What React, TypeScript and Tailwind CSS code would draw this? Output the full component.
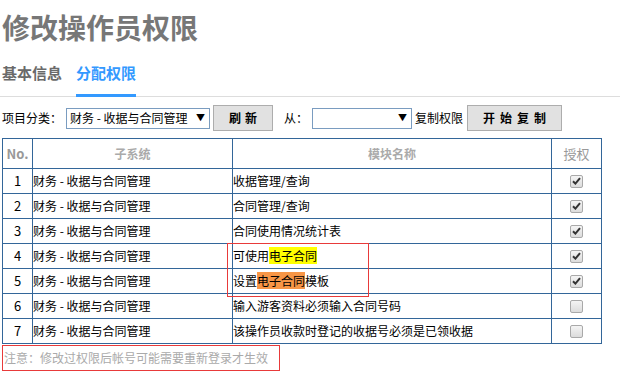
import React from "react";

const font = { fontFamily: '"Microsoft YaHei", "Noto Sans CJK SC", "Noto Sans", sans-serif' };

function Check({ on }: { on: boolean }) {
  return (
    <div className="w-[13px] h-[13px] rounded-[2px] border border-[#a9a9a9] bg-gradient-to-b from-[#f4f4f4] to-[#dcdcdc] flex items-center justify-center">
      {on && (
        <svg width="9" height="8" viewBox="0 0 9 8">
          <path d="M1 4.2 L3.4 6.6 L8 1.2" stroke="#333" strokeWidth="2" fill="none" />
        </svg>
      )}
    </div>
  );
}

const rows: { mod: React.ReactNode; on: boolean }[] = [
  { mod: "收据管理/查询", on: true },
  { mod: "合同管理/查询", on: true },
  { mod: "合同使用情况统计表", on: true },
  {
    mod: (
      <>
        可使用<span className="bg-[#ffff00]">电子合同</span>
      </>
    ),
    on: true,
  },
  {
    mod: (
      <>
        设置<span className="bg-[#f79646]">电子合同</span>模板
      </>
    ),
    on: true,
  },
  { mod: "输入游客资料必须输入合同号码", on: false },
  { mod: "该操作员收款时登记的收据号必须是已领收据", on: false },
];

export default function App() {
  return (
    <div className="w-[621px] h-[379px] bg-white pl-[2px] text-[12px] text-black overflow-hidden" style={font}>
      <div className="h-[54px] flex items-center text-[28px] leading-[28px] font-bold text-[#777777]">
        修改操作员权限
      </div>
      <div className="flex border-b border-[#dddddd] mr-[1px] -ml-[2px] pl-[2px]">
        <div className="pt-[9px] pb-[11px] text-[15px] leading-[20px] font-bold text-[#6a6a6a] border-b-[3px] border-transparent -mb-px">
          基本信息
        </div>
        <div className="ml-[14px] pt-[9px] pb-[11px] text-[15px] leading-[20px] font-bold text-[#3399ff] border-b-[3px] border-[#3399ff] -mb-px">
          分配权限
        </div>
      </div>
      <div className="mt-[8px] h-[26px] flex items-center">
        <span className="w-[60px] whitespace-nowrap">项目分类：</span>
        <div className="ml-[4px] w-[144px] h-[21px] border border-[#7a9cc0] flex items-center pl-[3px] pr-[4px] justify-between whitespace-nowrap">
          <span>财务 - 收据与合同管理</span>
          <span className="text-[9px]">▼</span>
        </div>
        <div className="ml-[3px] w-[60px] h-[26px] border border-[#adadad] bg-[#e1e1e1] flex items-center justify-center font-bold text-[12px] tracking-[4px] pl-[4px]">
          刷新
        </div>
        <span className="ml-[11px] w-[24px] whitespace-nowrap">从：</span>
        <div className="ml-[4px] w-[100px] h-[21px] border border-[#7a9cc0] flex items-center justify-end pr-[4px]">
          <span className="text-[9px]">▼</span>
        </div>
        <span className="ml-[3px] whitespace-nowrap">复制权限</span>
        <div className="ml-[4px] w-[95px] h-[26px] border border-[#adadad] bg-[#e1e1e1] flex items-center justify-center font-bold text-[12px] tracking-[5px] pl-[5px]">
          开始复制
        </div>
      </div>
      <div className="relative mt-[7px] w-[600px] border-l border-t border-[#336699]">
        <div className="grid grid-cols-[30px_200px_319px_50px]">
          <div className="h-[30px] border-r border-b border-[#336699] flex items-center justify-center font-bold text-[13px] text-[#999999]">
            No.
          </div>
          <div className="h-[30px] border-r border-b border-[#336699] flex items-center justify-center font-bold text-[12px] text-[#aaaaaa]">
            子系统
          </div>
          <div className="h-[30px] border-r border-b border-[#336699] flex items-center justify-center font-bold text-[12px] text-[#aaaaaa]">
            模块名称
          </div>
          <div className="h-[30px] border-r border-b border-[#336699] flex items-center justify-center text-[13px] text-[#999999]">
            授权
          </div>
          {rows.map((r, i) => (
            <React.Fragment key={i}>
              <div className="h-[25px] border-r border-b border-[#336699] flex items-center justify-center text-[13px]">
                {i + 1}
              </div>
              <div className="h-[25px] border-r border-b border-[#336699] flex items-center whitespace-nowrap">
                财务 - 收据与合同管理
              </div>
              <div className="h-[25px] border-r border-b border-[#336699] flex items-center whitespace-nowrap">
                <span>{r.mod}</span>
              </div>
              <div className="h-[25px] border-r border-b border-[#336699] flex items-center justify-center">
                <Check on={r.on} />
              </div>
            </React.Fragment>
          ))}
        </div>
        <div className="absolute left-[224px] top-[104px] w-[142px] h-[54px] border border-[#e83a3a]" />
      </div>
      <div className="mt-px w-[278px] h-[26px] border border-[#e83a3a] flex items-center pl-px text-[#aaaaaa] whitespace-nowrap">
        注意：修改过权限后帐号可能需要重新登录才生效
      </div>
    </div>
  );
}
